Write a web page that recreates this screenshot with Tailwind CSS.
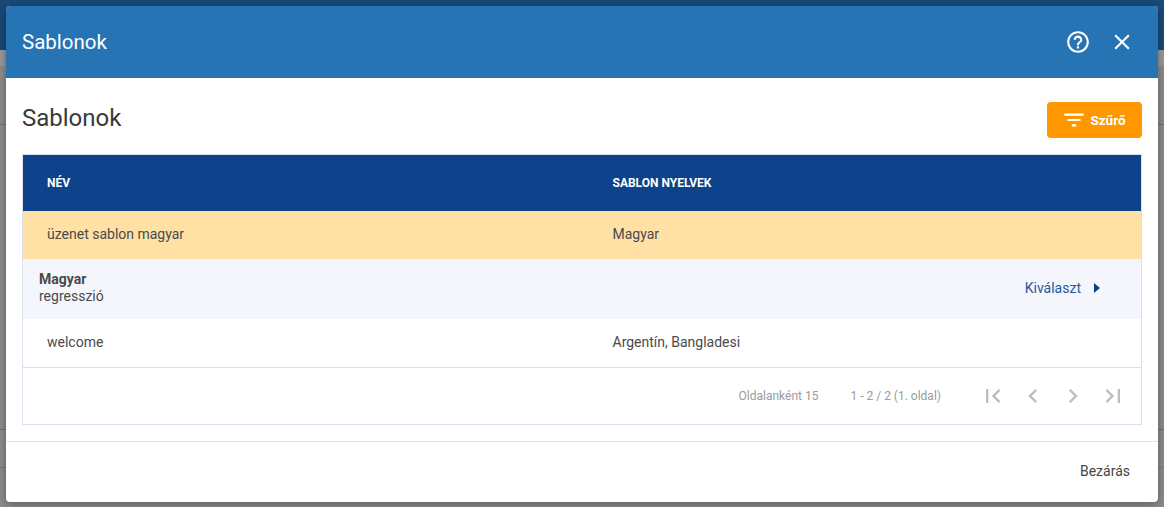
<!DOCTYPE html>
<html lang="en">
<head>
    <meta charset="UTF-8">
    <title>Sablonok</title>
    <script src="https://cdn.jsdelivr.net/npm/@tailwindcss/browser@4"></script>
</head>
<body class="relative w-[1164px] h-[507px] overflow-hidden bg-[#8c8c8c] font-['Roboto',sans-serif]">
    <!-- Page behind the dialog -->
    <div class="h-[50px] bg-[#1a4a77]"></div>
    <div class="h-[16px] bg-[#999999]"></div>
    <div class="h-[59px] border-b border-[#6f6f6f]"></div>
    <div class="h-[305px] border-b border-[#6f6f6f]"></div>
    <div class="h-[38px] border-b border-[#7a7a7a]"></div>

    <!-- Dialog -->
    <div class="absolute left-[6px] top-[6px] w-[1152px] h-[496px] flex flex-col bg-white rounded-[4px] overflow-hidden shadow-[0_2px_10px_rgba(0,0,0,0.35)]">
        <div class="h-[72px] shrink-0 flex items-center justify-between bg-[#2774b5] pl-[16px] pr-[23px]">
            <h1 class="text-[20.5px] font-[450] text-white leading-[28px]">Sablonok</h1>
            <div class="flex items-center gap-[18px]">
                <svg class="w-[26px] h-[26px]" viewBox="0 0 24 24" fill="#fff"><path d="M11 18h2v-2h-2v2zm1-16C6.48 2 2 6.48 2 12s4.48 10 10 10 10-4.48 10-10S17.52 2 12 2zm0 18c-4.41 0-8-3.59-8-8s3.59-8 8-8 8 3.59 8 8-3.59 8-8 8zm0-14c-2.21 0-4 1.79-4 4h2c0-1.1.9-2 2-2s2 .9 2 2c0 2-3 1.75-3 5h2c0-2.25 3-2.5 3-5 0-2.21-1.79-4-4-4z"/></svg>
                <svg class="w-[26px] h-[26px]" viewBox="0 0 24 24" fill="#fff"><path d="M19 6.41 17.59 5 12 10.59 6.41 5 5 6.41 10.59 12 5 17.59 6.41 19 12 13.41 17.59 19 19 17.59 13.41 12z"/></svg>
            </div>
        </div>

        <div class="flex-1 px-[16px]">
            <div class="h-[76px] pt-[4px] flex items-center justify-between">
                <h2 class="text-[24px] text-[#3a3a3a]">Sablonok</h2>
                <button class="w-[95px] h-[36px] mt-[4px] pr-[2px] flex items-center justify-center gap-[3px] rounded-[4px] bg-[#ff9800] text-white text-[13.5px] font-bold">
                    <svg class="w-[26px] h-[26px]" viewBox="0 0 24 24" fill="#fff"><path d="M10 18h4v-2h-4v2zM3 6v2h18V6H3zm3 7h12v-2H6v2z"/></svg>
                    Szűrő
                </button>
            </div>

            <div class="border border-[#d8e2ee] text-[14px] text-[#4a4a4a]">
                <div class="h-[56px] grid grid-cols-[565.5px_1fr] items-center pl-[24px] bg-[#0e428a] text-white text-[12px] font-bold">
                    <span>NÉV</span>
                    <span>SABLON NYELVEK</span>
                </div>
                <div class="h-[48px] grid grid-cols-[565.5px_1fr] items-center pl-[24px] pb-[2px] bg-[#ffe1a6]">
                    <span>üzenet sablon magyar</span>
                    <span>Magyar</span>
                </div>
                <div class="h-[60px] flex items-center justify-between pl-[16px] pr-[32px] pb-[2px] bg-[#f4f6fb]">
                    <div class="leading-[17px]">
                        <div class="font-bold">Magyar</div>
                        <div>regresszió</div>
                    </div>
                    <div class="flex items-center gap-[4px] text-[#1f5a9e] text-[14px] font-[450]">
                        Kiválaszt
                        <svg class="w-[24px] h-[24px]" viewBox="0 0 24 24" fill="#0e428a"><path d="M9 7v10l6-5z"/></svg>
                    </div>
                </div>
                <div class="h-[46px] grid grid-cols-[565.5px_1fr] items-center pl-[24px] pb-[2px] border-b border-[#d8e2ee] box-content">
                    <span>welcome</span>
                    <span>Argentín, Bangladesi</span>
                </div>
                <div class="h-[56px] flex items-center justify-end pr-[14px] text-[12px] text-[#9a9a9a]">
                    <span>Oldalanként 15</span>
                    <span class="ml-[32px]">1 - 2 / 2 (1. oldal)</span>
                    <div class="ml-[38px] flex items-center gap-[12px]">
                        <svg class="w-[28px] h-[28px]" viewBox="0 0 24 24" fill="#bdbdbd"><path d="M18.41 16.59 13.82 12l4.59-4.59L17 6l-6 6 6 6zM6 6h2v12H6z"/></svg>
                        <svg class="w-[28px] h-[28px]" viewBox="0 0 24 24" fill="#bdbdbd"><path d="M15.41 7.41 14 6l-6 6 6 6 1.41-1.41L10.83 12z"/></svg>
                        <svg class="w-[28px] h-[28px]" viewBox="0 0 24 24" fill="#bdbdbd"><path d="M10 6 8.59 7.41 13.17 12l-4.58 4.59L10 18l6-6z"/></svg>
                        <svg class="w-[28px] h-[28px]" viewBox="0 0 24 24" fill="#bdbdbd"><path d="M5.59 7.41 10.18 12l-4.59 4.59L7 18l6-6-6-6zM16 6h2v12h-2z"/></svg>
                    </div>
                </div>
            </div>
        </div>

        <div class="h-[61px] shrink-0 flex items-center justify-end pr-[28px] pb-[2px] border-t border-[#dfe5ea] text-[14px] text-[#444444] font-[450]">
            Bezárás
        </div>
    </div>
</body>
</html>
